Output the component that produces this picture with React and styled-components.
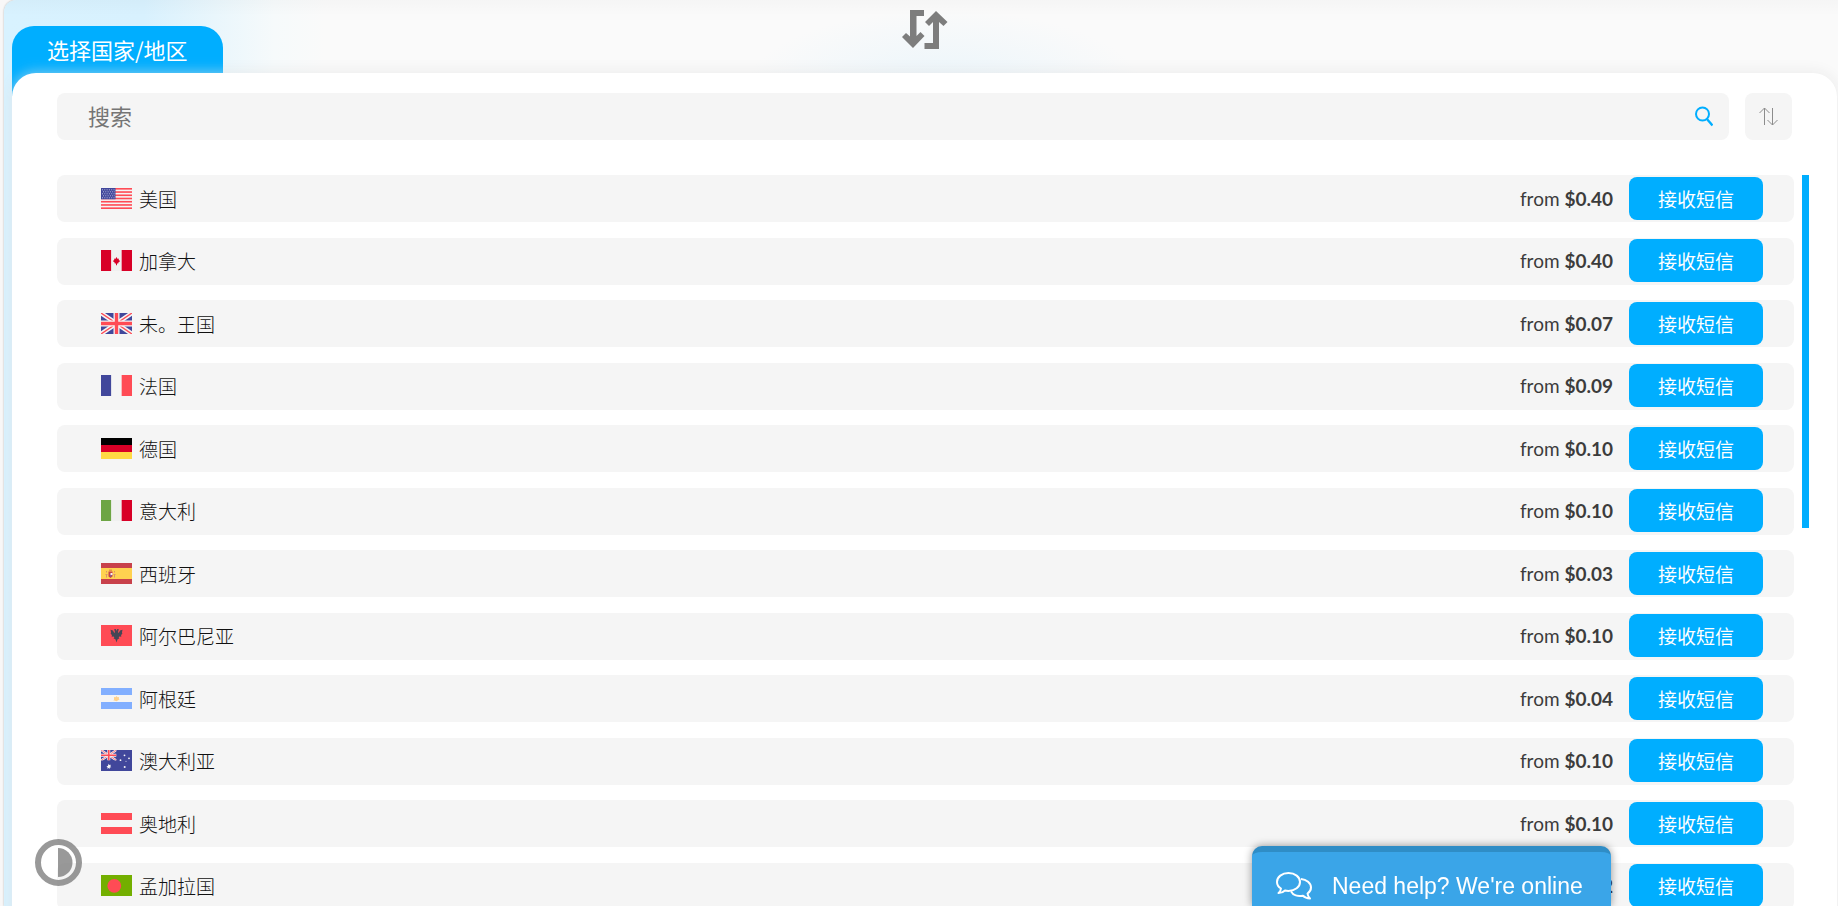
import React, { useState } from 'react';
import styled, { createGlobalStyle, css, ThemeProvider } from 'styled-components';

const theme = {
  blue: '#00aeff',
  panel: '#f5f5f5',
  text: '#3c3c3c',
  cjk: '"Noto Sans CJK SC", sans-serif',
  font: 'Lato, "Noto Sans CJK SC", sans-serif',
};

const GlobalStyle = createGlobalStyle`
  * {
    box-sizing: border-box;
  }

  body {
    margin: 0;
    background: #f8f7f7;
    overflow: hidden;
  }

  button, input {
    font: inherit;
    border: 0;
    padding: 0;
  }
`;

const center = css`
  display: flex;
  align-items: center;
  justify-content: center;
`;

const Shell = styled.div`
  height: 100vh;
  margin-left: 4px;
  padding-left: 8px;
  overflow: hidden;
  font-family: ${({ theme: t }) => t.font};
  color: ${({ theme: t }) => t.text};
  border-top-left-radius: 12px;
  box-shadow: 0 0 2px rgba(0, 0, 0, 0.3);
  background:
    linear-gradient(rgba(0, 0, 0, 0.02), transparent 16px),
    radial-gradient(ellipse 200px 80px at 940px 90px, #eaf5fb, transparent),
    linear-gradient(90deg, #d8f2ff, #d8f1fe 140px, #e9f6fc 210px, #f6fafb 270px, #fafafa 320px);
`;

const TopBar = styled.header`
  display: grid;
  grid-template-columns: 1fr auto 1fr;
  height: 73px;
`;

const Tab = styled.h1`
  justify-self: start;
  margin: 26px 0 0;
  padding: 0 35px;
  height: 70px;
  border-radius: 22px 22px 0 0;
  background: ${({ theme: t }) => t.blue};
  color: #fff;
  font-family: ${({ theme: t }) => t.cjk};
  font-size: 22px;
  font-weight: 400;
  line-height: 46px;
`;

const SwapButton = styled.button`
  align-self: start;
  height: 40px;
  margin-top: 9px;
  background: none;
  color: #7d7d7d;
`;

const Card = styled.main`
  position: relative;
  min-height: 100vh;
  margin-right: 1px;
  padding: 20px 28px 0 45px;
  border-radius: 24px 24px 0 0;
  background: #fff;
  box-shadow: 0 0 16px rgba(0, 0, 0, 0.08), 0 0 14px rgba(255, 255, 255, 0.6);
`;

const Toolbar = styled.div`
  display: flex;
  gap: 16px;
  margin-right: 17px;
`;

const SearchBox = styled.label`
  display: flex;
  align-items: center;
  flex: 1;
  height: 47px;
  padding: 0 16px 0 31px;
  border-radius: 8px;
  background: ${({ theme: t }) => t.panel};
`;

const SearchInput = styled.input`
  flex: 1;
  height: 47px;
  outline: none;
  background: none;
  font-size: 22px;

  &::placeholder {
    color: #757575;
    opacity: 1;
  }
`;

const SortButton = styled.button`
  ${center}
  width: 47px;
  height: 47px;
  border-radius: 8px;
  background: ${({ theme: t }) => t.panel};
  color: #8c8c8c;
`;

const ListArea = styled.div`
  display: flex;
  gap: 8px;
  margin-top: 35px;
`;

const List = styled.ul`
  flex: 1;
  margin: 0;
  padding: 0;
  list-style: none;
`;

const ScrollThumb = styled.div`
  width: 7px;
  height: 353px;
  background: ${({ theme: t }) => t.blue};
`;

const Row = styled.li`
  display: flex;
  align-items: center;
  height: 47px;
  margin-bottom: 16px;
  padding: 0 31px 0 44px;
  border-radius: 8px;
  background: ${({ theme: t }) => t.panel};
  font-size: 19px;

  &:nth-child(even) {
    margin-bottom: 15px;
    padding-bottom: 2px;
  }
`;

const FlagIcon = styled.svg`
  display: block;
  width: 31px;
  height: 21px;
  margin-right: 7px;
`;

const Name = styled.span`
  flex: 1;
  color: #111;
  font-family: ${({ theme: t }) => t.cjk};
  font-weight: 300;
`;

const Price = styled.span`
  margin-right: 16px;
`;

const ReceiveButton = styled.button`
  width: 134px;
  height: 43px;
  border-radius: 8px;
  background: ${({ theme: t }) => t.blue};
  color: #fff;
  font-family: ${({ theme: t }) => t.cjk};
`;

const ContrastButton = styled.button`
  position: fixed;
  left: 35px;
  bottom: 20px;
  width: 47px;
  height: 47px;
  background: none;
`;

const Chat = styled.button`
  position: fixed;
  right: 227px;
  bottom: 0;
  display: flex;
  align-items: center;
  justify-content: flex-start;
  gap: 20px;
  width: 359px;
  height: 60px;
  padding: 14px 24px 0;
  border-top: 6px solid #2f8dc6;
  border-radius: 10px 10px 0 0;
  background: #3aa5e8;
  box-shadow: 0 0 8px rgba(0, 0, 0, 0.4);
  color: #fff;
  font-family: 'Liberation Sans', sans-serif;
  font-size: 23px;
  white-space: nowrap;

  svg {
    flex-shrink: 0;
  }
`;

const UnionJack = () => (
  <>
    <path fill="#41479b" d="M0 0h31v21H0z" />
    <path stroke="#f5f5f5" strokeWidth="4.4" d="M0 0l31 21M31 0L0 21" />
    <path stroke="#ff4b55" strokeWidth="1.4" d="M0 0l31 21M31 0L0 21" />
    <path stroke="#f5f5f5" strokeWidth="6" d="M15.500 0v21M0 10.500h31" />
    <path stroke="#ff4b55" strokeWidth="3.400" d="M15.500 0v21M0 10.500h31" />
  </>
);

const Bands = ({ colors, vertical }) => {
  const size = (vertical ? 31 : 21) / colors.length;
  return colors.map((fill, i) => (
    <rect
      key={i}
      x={vertical ? i * size : 0}
      y={vertical ? 0 : i * size}
      width={vertical ? size : 31}
      height={vertical ? 21 : size}
      fill={fill}
    />
  ));
};

const flags = {
  us: (
    <>
      <path fill="#f5f5f5" d="M0 0h31v21H0z" />
      {[0, 1, 2, 3, 4, 5, 6].map(i => (
        <rect key={i} y={i * 3.23} width="31" height="1.62" fill="#ff4b55" />
      ))}
      <path fill="#41479b" d="M0 0h14.500v11.300H0z" />
      <path
        stroke="#b5b8dc"
        strokeWidth="1"
        strokeDasharray="1 1.300"
        d="M1 1.800h13M2 3.800h12M1 5.800h13M2 7.800h12M1 9.800h13"
      />
    </>
  ),
  ca: (
    <>
      <Bands vertical colors={['#d80027', '#f0f0f0', '#d80027']} />
      <path
        fill="#d80027"
        d="M15.500 7l1.200 2 1.300-.5-.3 1.600 1.500.9-2 1.700.1.900h-1.300v1.600h-1v-1.600h-1.300l.1-.9-2-1.700 1.500-.9-.3-1.600 1.300.5z"
      />
    </>
  ),
  gb: <UnionJack />,
  fr: <Bands vertical colors={['#41479b', '#f5f5f5', '#ff4b55']} />,
  de: <Bands colors={['#000', '#d80027', '#ffda44']} />,
  it: <Bands vertical colors={['#6da544', '#f0f0f0', '#d80027']} />,
  es: (
    <>
      <path fill="#c8414b" d="M0 0h31v21H0z" />
      <path fill="#ffd250" d="M0 5h31v11H0z" />
      <path fill="#c8414b" d="M7.500 8.500h4v5l-2 1.500-2-1.500z" />
      <path fill="#f5f5f5" d="M9.500 10h2v2h-2z" />
      <path fill="#7a6a9b" d="M9 12h1.500v1.500H9z" />
      <path fill="#e8924a" d="M8 6.500h3v1.500H8z" />
      <path stroke="#d9946a" d="M5.500 8v1.500M5.500 11v3.500M13.500 8v1.500M13.500 11v3.500M4.500 11.500h2M12.500 11.500h2" />
    </>
  ),
  al: (
    <>
      <path fill="#ff4b55" d="M0 0h31v21H0z" />
      <path
        fill="#464655"
        d="M15.500 6l.6-2 2 .5-.8 1.300-.3 2 1-.2 1-2 2.500-.8-.5 2.500.3 1.500-1.200 1.300.2 1.700-1.700-.4-.9.700.6 2-1.300-.3-.6 1-.9 2.700-.9-2.700-.6-1-1.300.3.6-2-.9-.7-1.700.4.200-1.700-1.200-1.300.3-1.500-.5-2.500 2.500.8 1 2 1 .2-.3-2-.8-1.300 2-.5z"
      />
    </>
  ),
  ar: (
    <>
      <Bands colors={['#82afff', '#f5f5f5', '#82afff']} />
      <path fill="#ffd28c" d="M13 9l1.500.2 1-1.200 1 1.200L18 9l-.2 1.500.7 1-1 .5-2 1.200-2-.7-1 .3.500-1.300z" />
    </>
  ),
  au: (
    <>
      <path fill="#41479b" d="M0 0h31v21H0z" />
      <svg width="15.500" height="10.500" viewBox="0 0 31 21">
        <UnionJack />
      </svg>
      <g fill="#f5f5f5">
        <path d="M7.700 13.800l.7 1.300 1.500-.3-.6 1.400 1 1.100-1.500.2-.2 1.500-1-1-1.400.7.400-1.500-1.200-.9 1.400-.4z" />
        <circle cx="23.500" cy="5.300" r="0.900" />
        <circle cx="19.500" cy="10.200" r="0.900" />
        <circle cx="28" cy="8.300" r="0.900" />
        <circle cx="25" cy="11.300" r="0.500" />
        <circle cx="23.700" cy="17" r="1" />
      </g>
    </>
  ),
  at: <Bands colors={['#ff4b55', '#f5f5f5', '#ff4b55']} />,
  bd: (
    <>
      <path fill="#73af00" d="M0 0h31v21H0z" />
      <circle cx="13.300" cy="10.800" r="6.900" fill="#ff4b55" />
    </>
  ),
};

const countries = [
  { code: 'us', name: '美国', price: '$0.40' },
  { code: 'ca', name: '加拿大', price: '$0.40' },
  { code: 'gb', name: '未。王国', price: '$0.07' },
  { code: 'fr', name: '法国', price: '$0.09' },
  { code: 'de', name: '德国', price: '$0.10' },
  { code: 'it', name: '意大利', price: '$0.10' },
  { code: 'es', name: '西班牙', price: '$0.03' },
  { code: 'al', name: '阿尔巴尼亚', price: '$0.10' },
  { code: 'ar', name: '阿根廷', price: '$0.04' },
  { code: 'au', name: '澳大利亚', price: '$0.10' },
  { code: 'at', name: '奥地利', price: '$0.10' },
  { code: 'bd', name: '孟加拉国', price: '$0.12' },
];

const App = () => {
  const [query, setQuery] = useState('');
  const visible = countries.filter(({ name }) => name.includes(query));

  return (
    <ThemeProvider theme={theme}>
      <GlobalStyle />
      <Shell>
        <TopBar>
          <Tab>选择国家/地区</Tab>
          <SwapButton aria-label="swap">
            <svg width="46" height="40" viewBox="0 0 46 40" fill="currentColor">
              <path d="M8 1h14v6h-7.500v20l4-4 4 4L11 39 0 28l4-4 4 3.500z" />
              <path d="M37 40H22.500v-6H31V13l-4 4-4-4L34 2l11.500 11-4 4-4.500-4z" />
            </svg>
          </SwapButton>
        </TopBar>

        <Card>
          <Toolbar>
            <SearchBox>
              <SearchInput
                aria-label="搜索"
                placeholder="搜索"
                value={query}
                onChange={e => setQuery(e.target.value)}
              />
              <svg width="18" height="22" viewBox="0 0 18 22" fill="none" stroke="#00aeff" strokeWidth="2">
                <circle cx="7.500" cy="8" r="6.500" />
                <path strokeWidth="2.400" d="M11.500 12.500l6 7" />
              </svg>
            </SearchBox>
            <SortButton aria-label="sort">
              <svg width="19" height="19" viewBox="0 0 19 19" fill="none" stroke="currentColor">
                <path d="M5.500 18V1M.5 6l5-5 5 5M13.500 1v17M8.500 13l5 5 5-5" />
              </svg>
            </SortButton>
          </Toolbar>

          <ListArea>
            <List>
              {visible.map(({ code, name, price }) => (
                <Row key={code}>
                  <FlagIcon viewBox="0 0 31 21">{flags[code]}</FlagIcon>
                  <Name>{name}</Name>
                  <Price>
                    from <b>{price}</b>
                  </Price>
                  <ReceiveButton>接收短信</ReceiveButton>
                </Row>
              ))}
            </List>
            <ScrollThumb />
          </ListArea>
        </Card>
      </Shell>

      <ContrastButton aria-label="contrast">
        <svg width="47" height="47" viewBox="0 0 47 47" opacity="0.8">
          <circle cx="23.500" cy="23.500" r="20.500" fill="none" stroke="#808080" strokeWidth="6" />
          <path fill="#808080" d="M23 9a14.500 14.500 0 0 1 0 29z" />
        </svg>
      </ContrastButton>

      <Chat>
        <svg width="36" height="28" viewBox="0 0 36 28" fill="none" stroke="#fff" strokeWidth="2" strokeLinejoin="round">
          <path d="M12.500 1C6 1 1 5 1 10c0 3 1.500 5 4 6.500-.2 2-1 3.200-2.500 4.500 3 0 5-1 6.500-2.500 1 .3 2.300.4 3.500.4C19 18.900 24 15 24 10S19 1 12.500 1z" />
          <path d="M25 7c5.500.5 10 4 10 8.500 0 2.500-1.500 4.700-3.500 6 .2 2 1 3.500 2.500 5-3 0-5.500-1-7-2.800-5 1-10-.5-12-4.500" />
        </svg>
        <span>Need help? We're online</span>
      </Chat>
    </ThemeProvider>
  );
};

export default App;
